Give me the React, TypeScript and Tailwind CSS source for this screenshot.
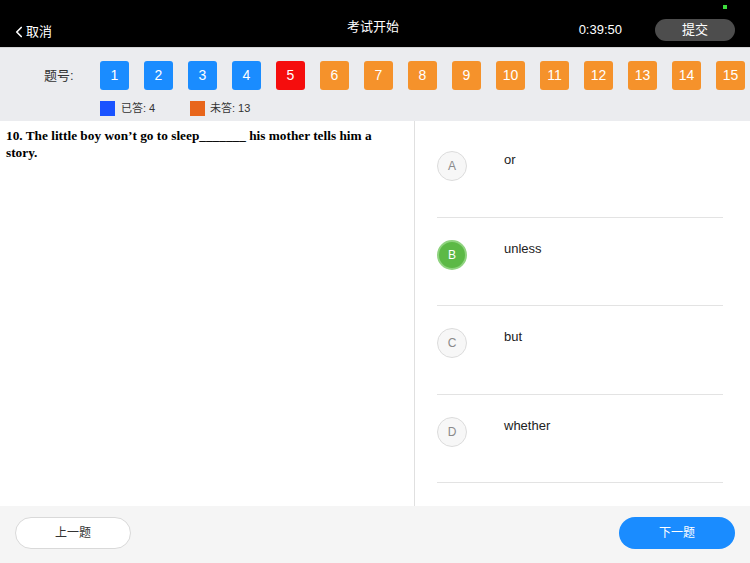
import { ChevronLeft } from "lucide-react";

const cn = "font-['Liberation_Sans','Noto_Sans_CJK_SC',sans-serif]";

type Status = "done" | "current" | "todo";

const questions: { n: number; status: Status }[] = Array.from({ length: 15 }, (_, i) => ({
  n: i + 1,
  status: i < 4 ? "done" : i === 4 ? "current" : "todo",
}));

const options = [
  { key: "A", text: "or" },
  { key: "B", text: "unless", picked: true },
  { key: "C", text: "but" },
  { key: "D", text: "whether" },
];

const statusClass: Record<Status, string> = {
  done: "bg-[#1a8cff]",
  current: "bg-[#f50d0d]",
  todo: "bg-[#f5922b]",
};

export default function App() {
  return (
    <div className={`w-[750px] h-[563px] flex flex-col overflow-hidden bg-white ${cn}`}>
      {/* header */}
      <div className="relative h-[47px] bg-black text-white flex items-start shrink-0">
        <div className="flex-1 basis-0 flex items-center pl-[11px] pt-[22px] text-[13px]">
          <ChevronLeft size={18} strokeWidth={2.2} className="-ml-[1px]" />
          <span className="-ml-[2px]">取消</span>
        </div>
        <div className="pt-[17px] text-[13px]">考试开始</div>
        <div className="flex-1 basis-0 flex items-center justify-end pr-[15px] pt-[19px]">
          <span className="text-[13px] mr-[33px]">0:39:50</span>
          <button className="w-[80px] h-[22px] rounded-full bg-[#4d4d4d] text-[13px] text-white">提交</button>
        </div>
        <div className="absolute top-[5px] left-[723px] w-[4px] h-[4px] bg-[#3ddc3d]" />
      </div>

      {/* question index bar */}
      <div className="h-[74px] bg-[#ebecef] border-t border-[#d4d4d6] shrink-0">
        <div className="flex items-center pt-[13px]">
          <span className="w-[100px] pl-[44px] text-[13px] text-[#333]">题号:</span>
          <div className="flex gap-[15px]">
            {questions.map((q) => (
              <div
                key={q.n}
                className={`w-[29px] h-[29px] rounded-[3px] flex items-center justify-center text-white text-[14px] ${statusClass[q.status]}`}
              >
                {q.n}
              </div>
            ))}
          </div>
        </div>
        <div className="flex items-center pl-[100px] pt-[10px] text-[11px] text-[#333]">
          <div className="w-[15px] h-[15px] bg-[#1a53ff]" />
          <span className="ml-[6px] w-[69px]">已答: 4</span>
          <div className="w-[15px] h-[15px] bg-[#e8661c]" />
          <span className="ml-[5px]">未答: 13</span>
        </div>
      </div>

      {/* content */}
      <div className="flex-1 flex min-h-0">
        <div className="w-[415px] border-r border-[#e0e0e0] px-[6px] pt-[6px]">
          <p className="max-w-[385px] font-['Liberation_Serif',serif] font-bold text-[13.3px] leading-[17px] text-black">
            10. The little boy won’t go to sleep_______ his mother tells him a story.
          </p>
        </div>
        <div className="flex-1 pl-[22px] pr-[27px] pt-[8px]">
          {options.map((o) => (
            <div key={o.key} className="h-[88.5px] border-b border-[#e3e3e3] flex items-start pt-[22px]">
              <div
                className={
                  o.picked
                    ? "w-[30px] h-[30px] rounded-full bg-[#5cb946] border-2 border-[#8fd37f] text-white text-[12px] flex items-center justify-center"
                    : "w-[30px] h-[30px] rounded-full bg-[#f7f7f7] border border-[#dcdcdc] text-[#8a8a8a] text-[12px] flex items-center justify-center"
                }
              >
                {o.key}
              </div>
              <span className="ml-[37px] -mt-[1px] text-[13px] text-[#222]">{o.text}</span>
            </div>
          ))}
        </div>
      </div>

      {/* footer */}
      <div className="h-[57px] bg-[#f5f5f5] flex items-start justify-between px-[15px] pt-[11px] shrink-0">
        <button className="w-[116px] h-[32px] rounded-full bg-white border border-[#d9d9d9] text-[12px] text-[#333]">上一题</button>
        <button className="w-[116px] h-[32px] rounded-full bg-[#1a8cff] text-[12px] text-white">下一题</button>
      </div>
    </div>
  );
}
